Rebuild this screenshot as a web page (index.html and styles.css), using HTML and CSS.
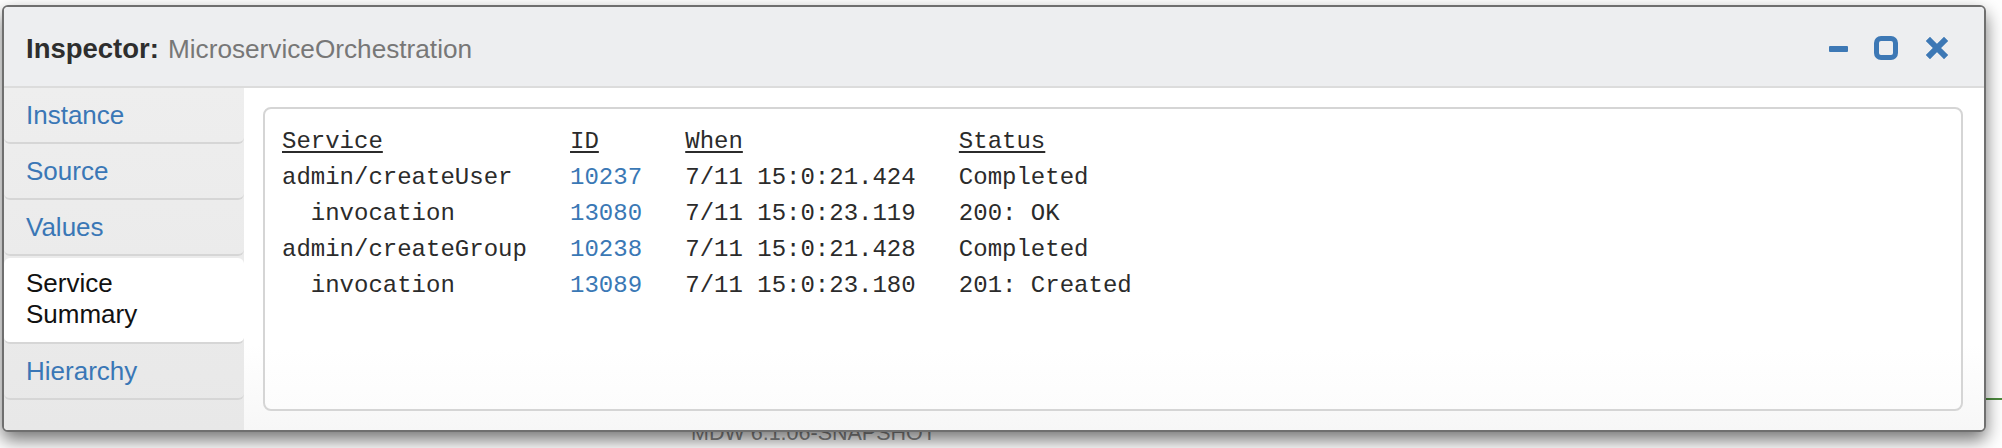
FILE: index.html
```html
<!DOCTYPE html>
<html>
<head>
<meta charset="utf-8">
<link rel="stylesheet" href="styles.css">
</head>
<body>
<div class="page">
  <div class="backdrop-line"></div>
  <div class="footer">MDW 6.1.06-SNAPSHOT</div>
  <div class="modal">
    <div class="modal-header">
      <div class="title"><span class="title-label">Inspector:</span><span class="title-name">MicroserviceOrchestration</span></div>
      <div class="controls">
        <svg class="ic ic-min" width="19" height="24" viewBox="0 0 19 24"><rect x="0" y="10" width="19" height="6" rx="1" fill="#3d78b5"/></svg>
        <svg class="ic ic-max" width="24" height="24" viewBox="0 0 24 24"><rect x="2.5" y="2.5" width="19" height="19" rx="4.5" fill="none" stroke="#3d78b5" stroke-width="5"/></svg>
        <svg class="ic ic-close" width="22" height="22" viewBox="0 0 22 22"><path d="M4 4 L18 18 M18 4 L4 18" stroke="#3d78b5" stroke-width="6" stroke-linecap="square"/></svg>
      </div>
    </div>
    <div class="modal-body">
      <ul class="tabs">
        <li class="tab">Instance</li>
        <li class="tab">Source</li>
        <li class="tab">Values</li>
        <li class="tab active">Service<br>Summary</li>
        <li class="tab">Hierarchy</li>
      </ul>
      <div class="content">
        <div class="panel">
          <div class="grid">
            <div class="hd">Service</div><div class="hd">ID</div><div class="hd">When</div><div class="hd">Status</div>
            <div>admin/createUser</div><div class="id">10237</div><div>7/11 15:0:21.424</div><div>Completed</div>
            <div>  invocation</div><div class="id">13080</div><div>7/11 15:0:23.119</div><div>200: OK</div>
            <div>admin/createGroup</div><div class="id">10238</div><div>7/11 15:0:21.428</div><div>Completed</div>
            <div>  invocation</div><div class="id">13089</div><div>7/11 15:0:23.180</div><div>201: Created</div>
          </div>
        </div>
      </div>
    </div>
  </div>
</div>
</body>
</html>
```
FILE: styles.css
```css
html, body {
  margin: 0;
  padding: 0;
  background: #ffffff;
}
.page {
  position: relative;
  width: 2002px;
  height: 448px;
  overflow: hidden;
  display: flex;
  flex-direction: column;
  justify-content: flex-end;
  padding-bottom: 3px;
  box-sizing: border-box;
}
.footer {
  font-family: "Liberation Sans", Arial, sans-serif;
  font-size: 21.5px;
  line-height: 24px;
  color: #8a8a8a;
  padding-left: 691px;
}
.backdrop-line {
  position: absolute;
  right: 0;
  top: 398px;
  width: 40px;
  height: 2px;
  background: #4d8a3f;
}
.modal {
  position: absolute;
  left: 2px;
  top: 5px;
  width: 1984px;
  height: 427px;
  box-sizing: border-box;
  border: 2px solid #6f6f6f;
  border-radius: 6px;
  background: #fff;
  box-shadow: 0 8px 18px rgba(0, 0, 0, 0.55);
  display: flex;
  flex-direction: column;
  overflow: hidden;
}
.modal-header {
  background: #edeef0;
  border-bottom: 2px solid #dcdcdc;
  height: 81px;
  box-sizing: border-box;
  padding: 0 36px 0 22px;
  display: flex;
  align-items: center;
  justify-content: space-between;
}
.title {
  font-family: "Liberation Sans", Arial, sans-serif;
  line-height: 30px;
  padding-top: 8px;
  color: #333;
}
.title-label {
  font-weight: bold;
  font-size: 27.5px;
  color: #2e2e2e;
  margin-right: 9px;
}
.title-name {
  font-size: 26.2px;
  color: #777;
}
.controls {
  display: flex;
  align-items: center;
  padding-top: 2px;
}
.ic { display: block; }
.ic-min { margin-right: 26px; }
.ic-max { margin-right: 28px; }
.modal-body {
  flex: 1;
  display: flex;
  min-height: 0;
}
.tabs {
  list-style: none;
  margin: 0;
  padding: 0;
  width: 240px;
  background: linear-gradient(#eeeeee, #e8e8e8);
  font-family: "Liberation Sans", Arial, sans-serif;
  font-size: 26px;
  line-height: 31px;
}
.tab {
  margin-top: 2px;
  padding: 10px 10px 11px 22px;
  border-bottom: 2px solid #d6d6d6;
  border-radius: 6px;
  color: #3a77b6;
}
.tab.active {
  background: #fff;
  color: #111;
  padding-bottom: 12px;
}
.content {
  flex: 1;
  display: flex;
  padding: 19px 21px 19px 19px;
  background: linear-gradient(#ffffff 75%, #f7f7f7);
}
.panel {
  flex: 1;
  border: 2px solid #d5d5d5;
  border-radius: 8px;
  background: linear-gradient(#ffffff 80%, #fcfcfc);
  padding: 15px 17px;
}
.grid {
  display: grid;
  grid-template-columns: repeat(4, max-content);
  column-gap: 43.2px;
  font-family: "Liberation Mono", "Courier New", monospace;
  font-size: 24px;
  line-height: 36px;
  color: #2b2b2b;
  white-space: pre;
}
.hd {
  text-decoration: underline;
  text-underline-offset: 3px;
}
.id {
  color: #3a78b5;
}
```
